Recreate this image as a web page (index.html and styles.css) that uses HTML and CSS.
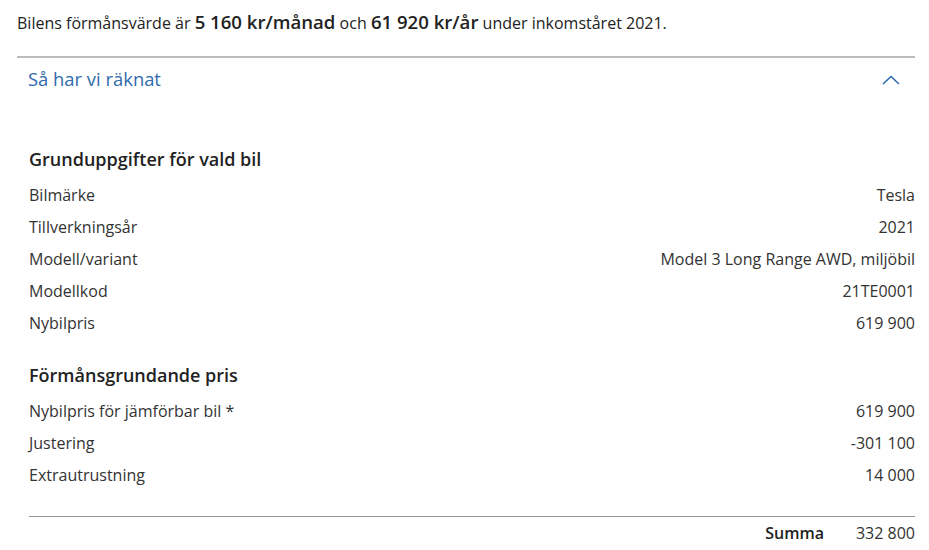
FILE: index.html
```html
<!DOCTYPE html>
<html lang="sv">
<head>
<meta charset="utf-8">
<title>Förmånsvärde</title>
<link rel="stylesheet" href="styles.css">
</head>
<body>
<p class="summary">Bilens förmånsvärde är <strong>5 160 kr/månad</strong> och <strong>61 920 kr/år</strong> under inkomståret 2021.</p>
<section class="accordion">
  <div class="acc-header">
    <span class="acc-title">Så har vi räknat</span>
    <svg class="chev" width="18" height="10" viewBox="0 0 18 10"><path d="M1 9 L9 1.5 L17 9" fill="none" stroke="#2f6aad" stroke-width="1.6"/></svg>
  </div>
  <div class="acc-body">
    <h3 class="group-title">Grunduppgifter för vald bil</h3>
    <div class="row"><span>Bilmärke</span><span>Tesla</span></div>
    <div class="row"><span>Tillverkningsår</span><span>2021</span></div>
    <div class="row"><span>Modell/variant</span><span>Model 3 Long Range AWD, miljöbil</span></div>
    <div class="row"><span>Modellkod</span><span>21TE0001</span></div>
    <div class="row"><span>Nybilpris</span><span>619 900</span></div>
    <h3 class="group-title second">Förmånsgrundande pris</h3>
    <div class="row"><span>Nybilpris för jämförbar bil *</span><span>619 900</span></div>
    <div class="row"><span>Justering</span><span>-301 100</span></div>
    <div class="row"><span>Extrautrustning</span><span>14 000</span></div>
    <div class="sum-row"><span class="sum-label">Summa</span><span>332 800</span></div>
  </div>
</section>
</body>
</html>
```
FILE: styles.css
```css
html, body {
  margin: 0;
  padding: 0;
  background: #fff;
}
body {
  font-family: "Open Sans", "Noto Sans", sans-serif;
  font-size: 16px;
  color: #333;
  padding: 10px 14px 0 17px;
}
.summary {
  margin: 0;
  line-height: 24px;
  color: #222;
}
.summary strong {
  font-size: 18.6px;
  font-weight: 600;
}
.accordion {
  margin-top: 21px;
  border-top: 2px solid #bcbcbc;
}
.acc-header {
  display: flex;
  align-items: center;
  justify-content: space-between;
  padding: 9px 15px 9px 11px;
}
.acc-title {
  font-size: 18.4px;
  line-height: 24px;
  color: #2f6aad;
}
.chev {
  display: block;
  margin-top: 2px;
}
.acc-body {
  padding: 47px 0 0 12px;
}
.group-title {
  margin: 0 0 8px;
  font-size: 18px;
  line-height: 24px;
  font-weight: 600;
  color: #222;
}
.group-title.second {
  margin-top: 24px;
}
.row {
  display: flex;
  justify-content: space-between;
  line-height: 32px;
}
.sum-row {
  margin-top: 25px;
  border-top: 1px solid #999;
  display: flex;
  justify-content: flex-end;
  gap: 32px;
  line-height: 32px;
}
.sum-label {
  font-weight: 600;
  color: #222;
}
```
